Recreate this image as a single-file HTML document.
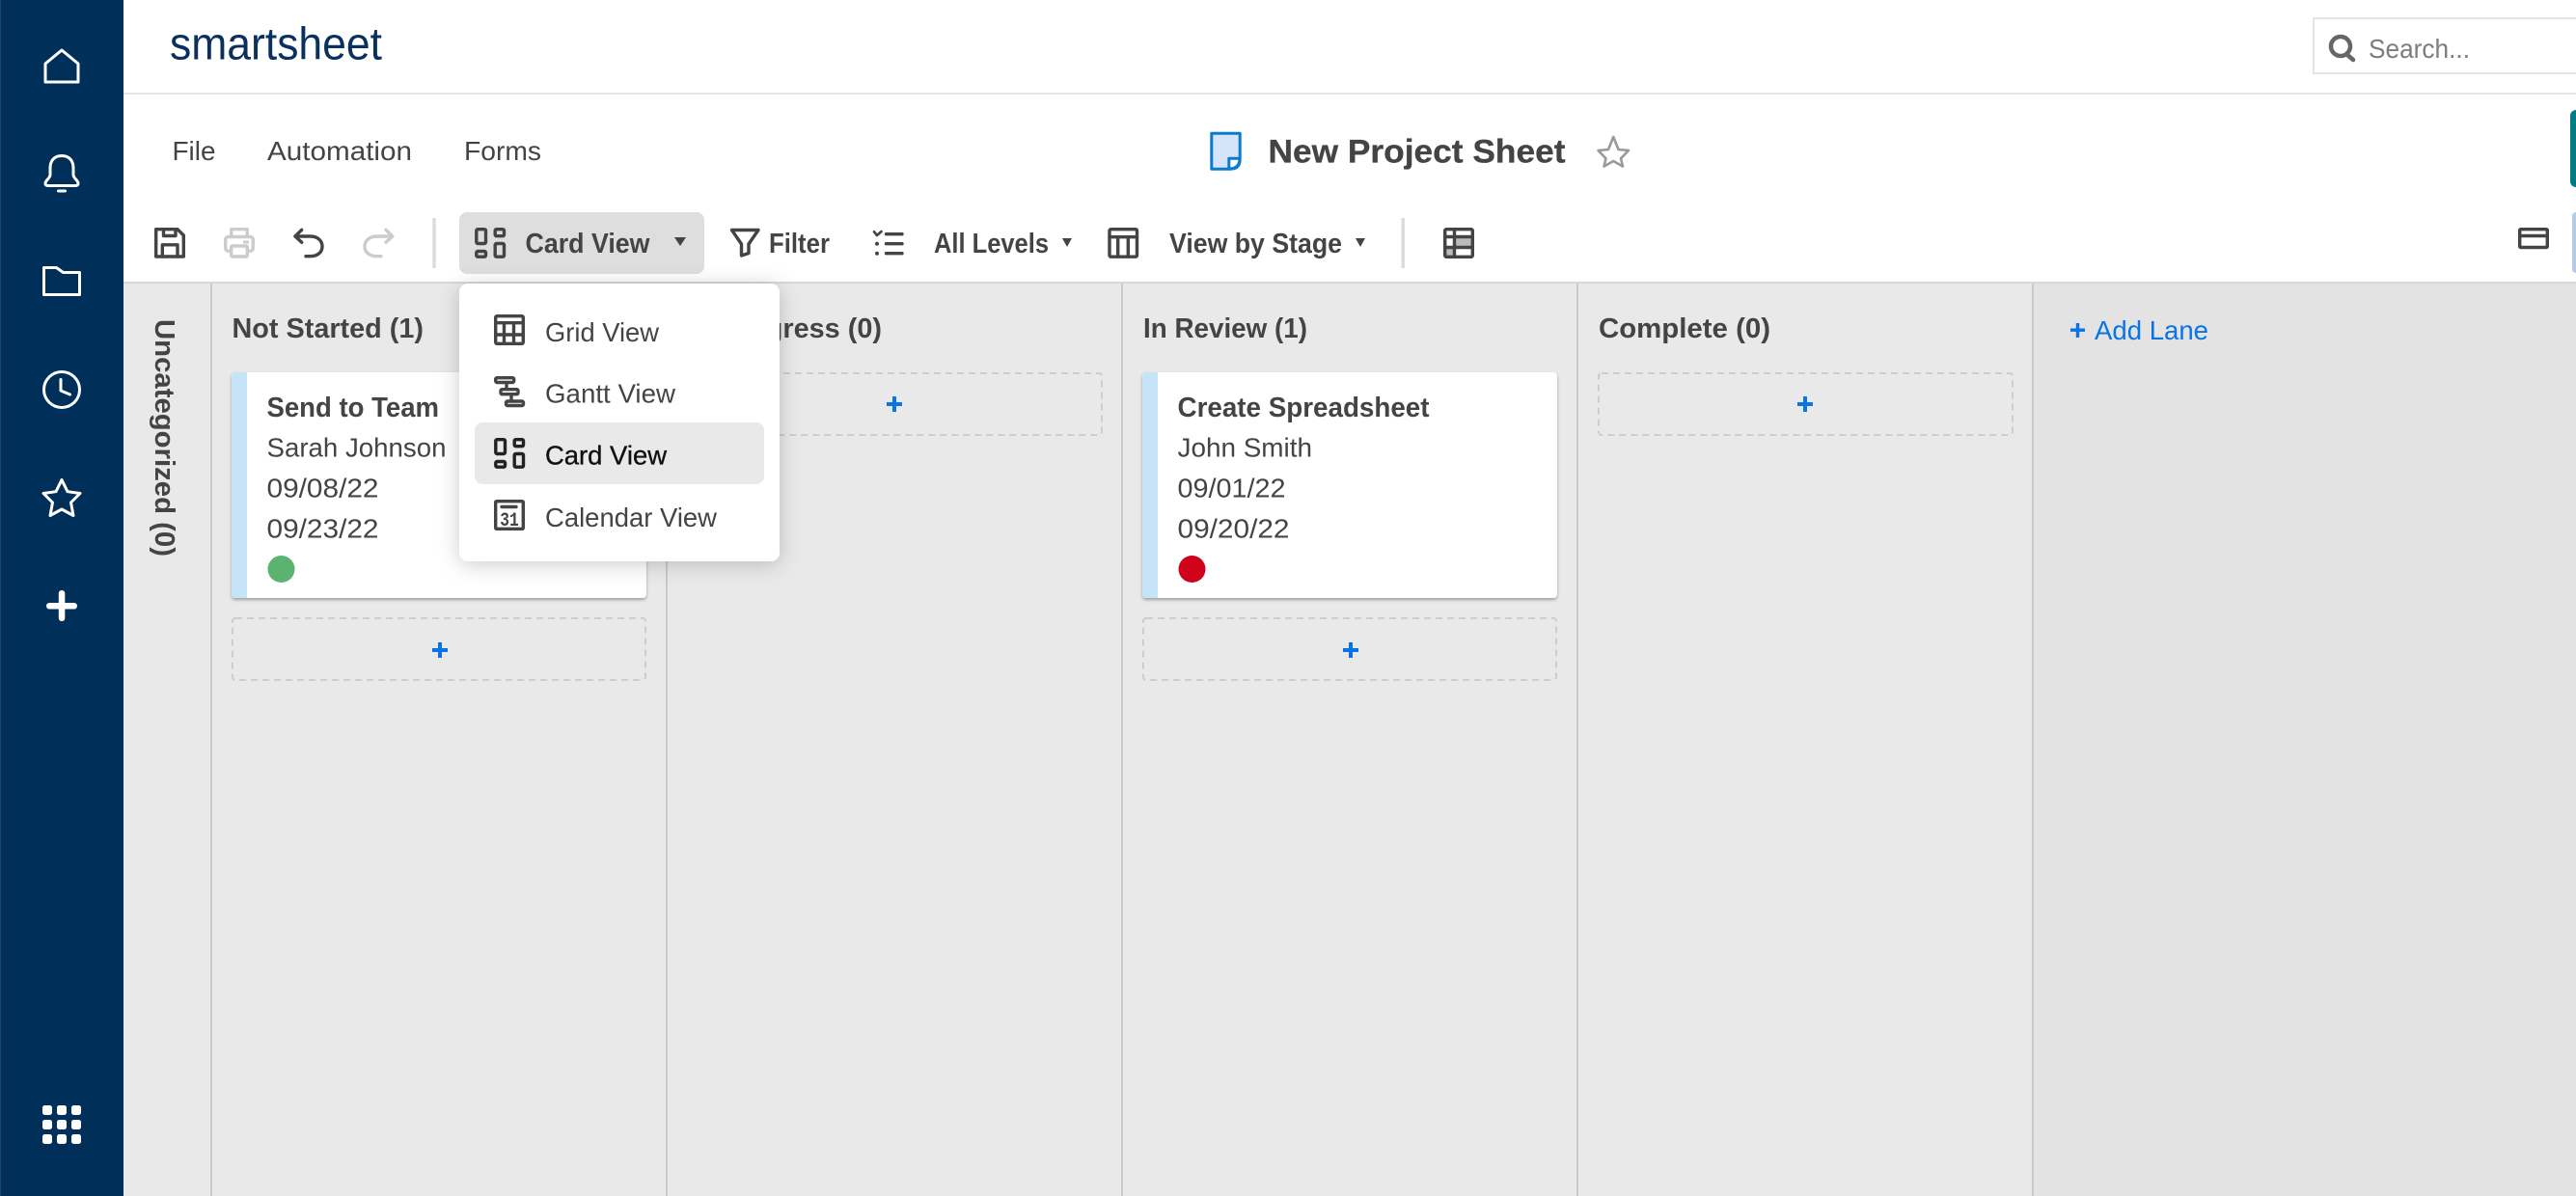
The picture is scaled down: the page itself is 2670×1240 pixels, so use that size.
<!DOCTYPE html>
<html lang="en">
<head>
<meta charset="utf-8">
<title>New Project Sheet - Smartsheet</title>
<style>
html,body{margin:0;padding:0;width:2670px;height:1240px;overflow:hidden;background:#fff}
svg{position:absolute;left:0;top:0;display:block}
text{font-family:"Liberation Sans",sans-serif;fill:#444;font-size:28px}
.b{font-weight:700;font-size:28.5px}
.ic{fill:none;stroke:#444;stroke-width:3.4;stroke-linejoin:round;stroke-linecap:round}
.side{fill:none;stroke:#fff;stroke-width:3;stroke-linejoin:round;stroke-linecap:round}
.blue{fill:#0a73e6}
.dash{fill:none;stroke:#cdcdcd;stroke-width:2;stroke-dasharray:7 5}
</style>
</head>
<body>
<svg width="2670" height="1240" viewBox="0 0 2670 1240" xmlns="http://www.w3.org/2000/svg">
<defs>
<filter id="cs" x="-5%" y="-5%" width="110%" height="115%"><feDropShadow dx="0" dy="2" stdDeviation="1.6" flood-color="#000" flood-opacity=".32"/></filter>
<filter id="ms" x="-20%" y="-20%" width="140%" height="140%"><feDropShadow dx="0" dy="3" stdDeviation="11" flood-color="#000" flood-opacity=".2"/></filter>
<g id="iCard"><rect x="1.8" y="1.7" width="9.7" height="14.8" rx="1.5"/><rect x="21.2" y="1.7" width="9.3" height="7" rx="1.5"/><rect x="1.8" y="24.5" width="9.7" height="5.7" rx="1.5"/><rect x="21.2" y="16.5" width="9.3" height="13.7" rx="1.5"/></g>
</defs>

<!-- board -->
<rect x="128" y="294" width="2542" height="946" fill="#e9e9e9"/>
<rect x="2108" y="294" width="562" height="946" fill="#e3e3e3"/>
<g fill="#c9c9c9">
<rect x="218" y="294" width="2" height="946"/><rect x="690" y="294" width="2" height="946"/><rect x="1162" y="294" width="2" height="946"/><rect x="1634" y="294" width="2" height="946"/><rect x="2106" y="294" width="2" height="946"/>
</g>

<!-- header lines -->
<rect x="128" y="96" width="2542" height="2" fill="#e6e6e6"/>
<rect x="128" y="292" width="2542" height="2" fill="#d8d8d8"/>

<!-- sidebar -->
<rect x="0" y="0" width="128" height="1240" fill="#002f5a"/>
<rect x="0" y="0" width="1" height="1240" fill="#1d4570"/>
<path class="side" d="M47 85V66L64 52L81 66V85Z"/>
<path class="side" d="M64 161.5C56 161.5 52 167 52 174V181C52 185 47 187 47 190C47 192 48 192.5 50 192.5H78C80 192.5 81 192 81 190C81 187 76 185 76 181V174C76 167 72 161.5 64 161.5Z"/>
<rect x="59" y="196.5" width="10" height="3" rx="1.5" fill="#fff"/>
<path class="side" d="M45.5 277.5H58.5L65.5 282.5H82.5V305.5H45.5Z"/>
<circle class="side" cx="64" cy="404" r="18.5"/>
<path class="side" d="M63 393.5V405L72.5 409"/>
<path class="side" d="M64 497.5L70 509.7L83 511.5L73.5 521L76 534.5L64 528L52 534.5L54.5 521L45 511.5L58 509.7Z"/>
<rect x="48" y="625" width="32" height="6.5" rx="3.2" fill="#fff"/>
<rect x="60.8" y="612" width="6.5" height="32" rx="3.2" fill="#fff"/>
<g fill="#fff">
<rect x="44" y="1146" width="10" height="10" rx="2.5"/><rect x="59" y="1146" width="10" height="10" rx="2.5"/><rect x="74" y="1146" width="10" height="10" rx="2.5"/>
<rect x="44" y="1161" width="10" height="10" rx="2.5"/><rect x="59" y="1161" width="10" height="10" rx="2.5"/><rect x="74" y="1161" width="10" height="10" rx="2.5"/>
<rect x="44" y="1176" width="10" height="10" rx="2.5"/><rect x="59" y="1176" width="10" height="10" rx="2.5"/><rect x="74" y="1176" width="10" height="10" rx="2.5"/>
</g>

<!-- logo -->
<text x="176" y="61.7" style="font-size:47px;fill:#0a315e" textLength="220" lengthAdjust="spacingAndGlyphs">smartsheet</text>

<!-- search -->
<rect x="2398" y="19" width="300" height="57" fill="#fff" stroke="#e4e4e4" stroke-width="2"/>
<circle cx="2426" cy="48" r="10" fill="none" stroke="#666" stroke-width="4.5"/>
<path d="M2432 56L2439 62" stroke="#666" stroke-width="4.5" stroke-linecap="round"/>
<text x="2455" y="60" style="fill:#7d7d7d" textLength="105" lengthAdjust="spacingAndGlyphs">Search...</text>

<!-- menu bar -->
<text x="178.5" y="166" textLength="45" lengthAdjust="spacingAndGlyphs">File</text>
<text x="277" y="166" textLength="150" lengthAdjust="spacingAndGlyphs">Automation</text>
<text x="481" y="166" textLength="80" lengthAdjust="spacingAndGlyphs">Forms</text>

<!-- title -->
<path d="M1255.8 138.2H1285.2V165Q1285.2 175.2 1275 175.2H1255.8Z" fill="#d6e4fa" stroke="#0a7ccc" stroke-width="3" stroke-linejoin="round"/>
<path d="M1273.8 175V164.2H1285Q1285 175 1273.8 175Z" fill="#fff" stroke="#0a7ccc" stroke-width="3" stroke-linejoin="round"/>
<text x="1314.5" y="168.3" class="b" style="font-size:34px;stroke:#444;stroke-width:.3" textLength="308" lengthAdjust="spacingAndGlyphs">New Project Sheet</text>
<path d="M1672.3 142L1677.5 155L1688 156L1680 164.3L1682 172.5L1672.3 167L1662.5 172.5L1664.5 164.3L1656.5 156L1667 155Z" fill="none" stroke="#999" stroke-width="2.6" stroke-linejoin="round"/>

<!-- right-edge buttons -->
<path d="M2670 114A6 6 0 0 0 2664 120V188A6 6 0 0 0 2670 194Z" fill="#007c80"/>
<path d="M2670 220A4 4 0 0 0 2666 224V279A4 4 0 0 0 2670 283Z" fill="#b3cde8"/>
<g class="ic"><rect x="2611.7" y="237.7" width="28.6" height="18.8" rx="1"/><path d="M2612 244.5H2640"/></g>

<!-- toolbar: save / print / undo / redo -->
<g class="ic">
<path d="M161.7 237.7H184L190.3 244V266H161.7Z"/>
<path d="M169.5 238V244.5H182V238"/>
<path d="M168.3 266V253.8H184V266"/>
</g>
<g class="ic" style="stroke:#ccc">
<rect x="239.7" y="237.7" width="16.6" height="9"/>
<rect x="233.7" y="245.5" width="28.6" height="14.8" rx="3" fill="#fff"/>
<rect x="239.7" y="255" width="16.6" height="11" rx="1" fill="#fff"/>
</g>
<rect x="252" y="249.5" width="6" height="3" fill="#ccc"/>
<g class="ic"><path d="M312.7 238.3L306 245L312.7 251.3"/><path d="M306 245H322C329 245 334 249.5 334 255.5C334 261.5 329 265.7 322 265.7H317"/></g>
<g class="ic" style="stroke:#ccc"><path d="M400 238.3L406.7 245L400 251.3"/><path d="M406.7 245H390.5C383 245 378 249.5 378 255.5C378 261.5 383 265.7 390.5 265.7H395"/></g>
<rect x="448.3" y="226" width="3.5" height="52" fill="#dcdcdc"/>

<!-- Card View button -->
<rect x="476" y="220" width="254" height="64" rx="8" fill="#dedede"/>
<use href="#iCard" x="492" y="236" class="ic"/>
<text x="544.5" y="262" class="b" textLength="129" lengthAdjust="spacingAndGlyphs">Card View</text>
<path d="M699 246H711L705 255Z" fill="#444"/>

<!-- Filter -->
<path class="ic" d="M758.5 238.5H786L776 253V262.5L768.5 265V253Z"/>
<text x="797" y="262" class="b" textLength="63" lengthAdjust="spacingAndGlyphs">Filter</text>

<!-- Levels -->
<path class="ic" style="stroke-width:2.6" d="M906 240.3L909 244L913.5 240"/>
<path class="ic" d="M918.5 242.7H935M918.5 252.7H935M918.5 262.7H935"/>
<circle cx="909" cy="252.7" r="2" fill="#444"/><circle cx="909" cy="262.7" r="2" fill="#444"/>
<text x="968" y="262" class="b" textLength="119" lengthAdjust="spacingAndGlyphs">All Levels</text>
<path d="M1101 247H1111L1106 256Z" fill="#444"/>

<!-- View by Stage -->
<g class="ic"><rect x="1150" y="237.7" width="28.5" height="28.5" rx="1.5"/><path d="M1150 245.7H1178.5M1158.7 246V266M1169.3 246V266"/></g>
<text x="1212" y="262" class="b" textLength="179" lengthAdjust="spacingAndGlyphs">View by Stage</text>
<path d="M1405 247H1415L1410 256Z" fill="#444"/>
<rect x="1452.5" y="226" width="3.5" height="52" fill="#dcdcdc"/>

<!-- grid toggle -->
<rect x="1508" y="247" width="18" height="9" fill="#bbb"/>
<rect x="1499" y="258" width="8" height="8" fill="#bbb"/>
<g class="ic"><rect x="1497.7" y="237.7" width="28.6" height="28.6" rx="1.5"/><path d="M1507.5 238V266M1498 245.5H1526M1498 256.5H1526"/></g>

<!-- column: uncategorized -->
<text transform="translate(161,331) rotate(90)" class="b" style="font-size:29px" textLength="246" lengthAdjust="spacingAndGlyphs">Uncategorized (0)</text>

<!-- column headers -->
<text x="240.5" y="350" class="b" textLength="198.5" lengthAdjust="spacingAndGlyphs">Not Started (1)</text>
<text x="712" y="350" class="b" textLength="202" lengthAdjust="spacingAndGlyphs">In Progress (0)</text>
<text x="1185" y="350" class="b" textLength="170" lengthAdjust="spacingAndGlyphs">In Review (1)</text>
<text x="1657" y="350" class="b" textLength="178" lengthAdjust="spacingAndGlyphs">Complete (0)</text>

<!-- add lane -->
<rect class="blue" x="2146" y="340.5" width="15" height="3.4"/><rect class="blue" x="2151.8" y="335" width="3.4" height="15"/>
<text x="2171" y="352" style="fill:#0a73e6" textLength="118" lengthAdjust="spacingAndGlyphs">Add Lane</text>

<!-- card 1 -->
<rect x="240" y="386" width="430" height="234" rx="4" fill="#fff" filter="url(#cs)"/>
<path d="M256 386H244A4 4 0 0 0 240 390V616A4 4 0 0 0 244 620H256Z" fill="#c5e4f7"/>
<text x="276.5" y="432" class="b" textLength="178.5" lengthAdjust="spacingAndGlyphs">Send to Team</text>
<text x="276.5" y="473.5" textLength="186" lengthAdjust="spacingAndGlyphs">Sarah Johnson</text>
<text x="276.5" y="515.5" textLength="116" lengthAdjust="spacingAndGlyphs">09/08/22</text>
<text x="276.5" y="557.5" textLength="116" lengthAdjust="spacingAndGlyphs">09/23/22</text>
<circle cx="291.5" cy="590" r="14" fill="#5ab36f"/>
<rect class="dash" x="241" y="641" width="428" height="64" rx="3"/>
<rect class="blue" x="448" y="672" width="16" height="4"/><rect class="blue" x="454" y="666" width="4" height="16"/>

<!-- in progress add -->
<rect class="dash" x="713" y="387" width="429" height="64" rx="3"/>
<rect class="blue" x="919" y="417" width="16" height="4"/><rect class="blue" x="925" y="411" width="4" height="16"/>

<!-- card 2 -->
<rect x="1184" y="386" width="430" height="234" rx="4" fill="#fff" filter="url(#cs)"/>
<path d="M1200 386H1188A4 4 0 0 0 1184 390V616A4 4 0 0 0 1188 620H1200Z" fill="#c5e4f7"/>
<text x="1220.5" y="432" class="b" textLength="261" lengthAdjust="spacingAndGlyphs">Create Spreadsheet</text>
<text x="1220.5" y="473.5" textLength="139.5" lengthAdjust="spacingAndGlyphs">John Smith</text>
<text x="1220.5" y="515.5" textLength="112" lengthAdjust="spacingAndGlyphs">09/01/22</text>
<text x="1220.5" y="557.5" textLength="116" lengthAdjust="spacingAndGlyphs">09/20/22</text>
<circle cx="1235.5" cy="590" r="14" fill="#d0011b"/>
<rect class="dash" x="1185" y="641" width="428" height="64" rx="3"/>
<rect class="blue" x="1392" y="672" width="16" height="4"/><rect class="blue" x="1398" y="666" width="4" height="16"/>

<!-- complete add -->
<rect class="dash" x="1657" y="387" width="429" height="64" rx="3"/>
<rect class="blue" x="1863" y="417" width="16" height="4"/><rect class="blue" x="1869" y="411" width="4" height="16"/>

<!-- dropdown menu -->
<rect x="476" y="294" width="332" height="288" rx="9" fill="#fff" filter="url(#ms)"/>
<rect x="492" y="438" width="300" height="64" rx="8" fill="#e9e9e9"/>

<g class="ic" transform="translate(512,326)"><rect x="1.7" y="1.7" width="28.6" height="28.6" rx="1.5"/><path d="M2 8.7H30M2 21H30M10.5 9V30M20.5 9V30"/></g>
<text x="565" y="354" textLength="118" lengthAdjust="spacingAndGlyphs">Grid View</text>

<g class="ic" transform="translate(512,390)"><rect x="1.7" y="1.7" width="19" height="4.8" rx="1.5"/><rect x="7" y="13.7" width="18" height="5" rx="1.5"/><rect x="12.5" y="26" width="18" height="4.5" rx="1.5"/><path d="M13 7V13M18 19V26"/></g>
<text x="565" y="417.5" textLength="135" lengthAdjust="spacingAndGlyphs">Gantt View</text>

<use href="#iCard" x="512" y="454" class="ic" style="stroke:#222"/>
<text x="565" y="481.5" style="fill:#111;stroke:#111;stroke-width:.35" textLength="126" lengthAdjust="spacingAndGlyphs">Card View</text>

<g class="ic" transform="translate(512,518)"><rect x="1.7" y="1.7" width="28.6" height="28.6" rx="1"/><path d="M8 7.5H23"/></g>
<text x="518.3" y="545" class="b" style="font-family:'Liberation Mono',monospace;font-size:20px" textLength="19.5" lengthAdjust="spacingAndGlyphs">31</text>
<text x="565" y="546" textLength="178" lengthAdjust="spacingAndGlyphs">Calendar View</text>
</svg>
</body>
</html>
